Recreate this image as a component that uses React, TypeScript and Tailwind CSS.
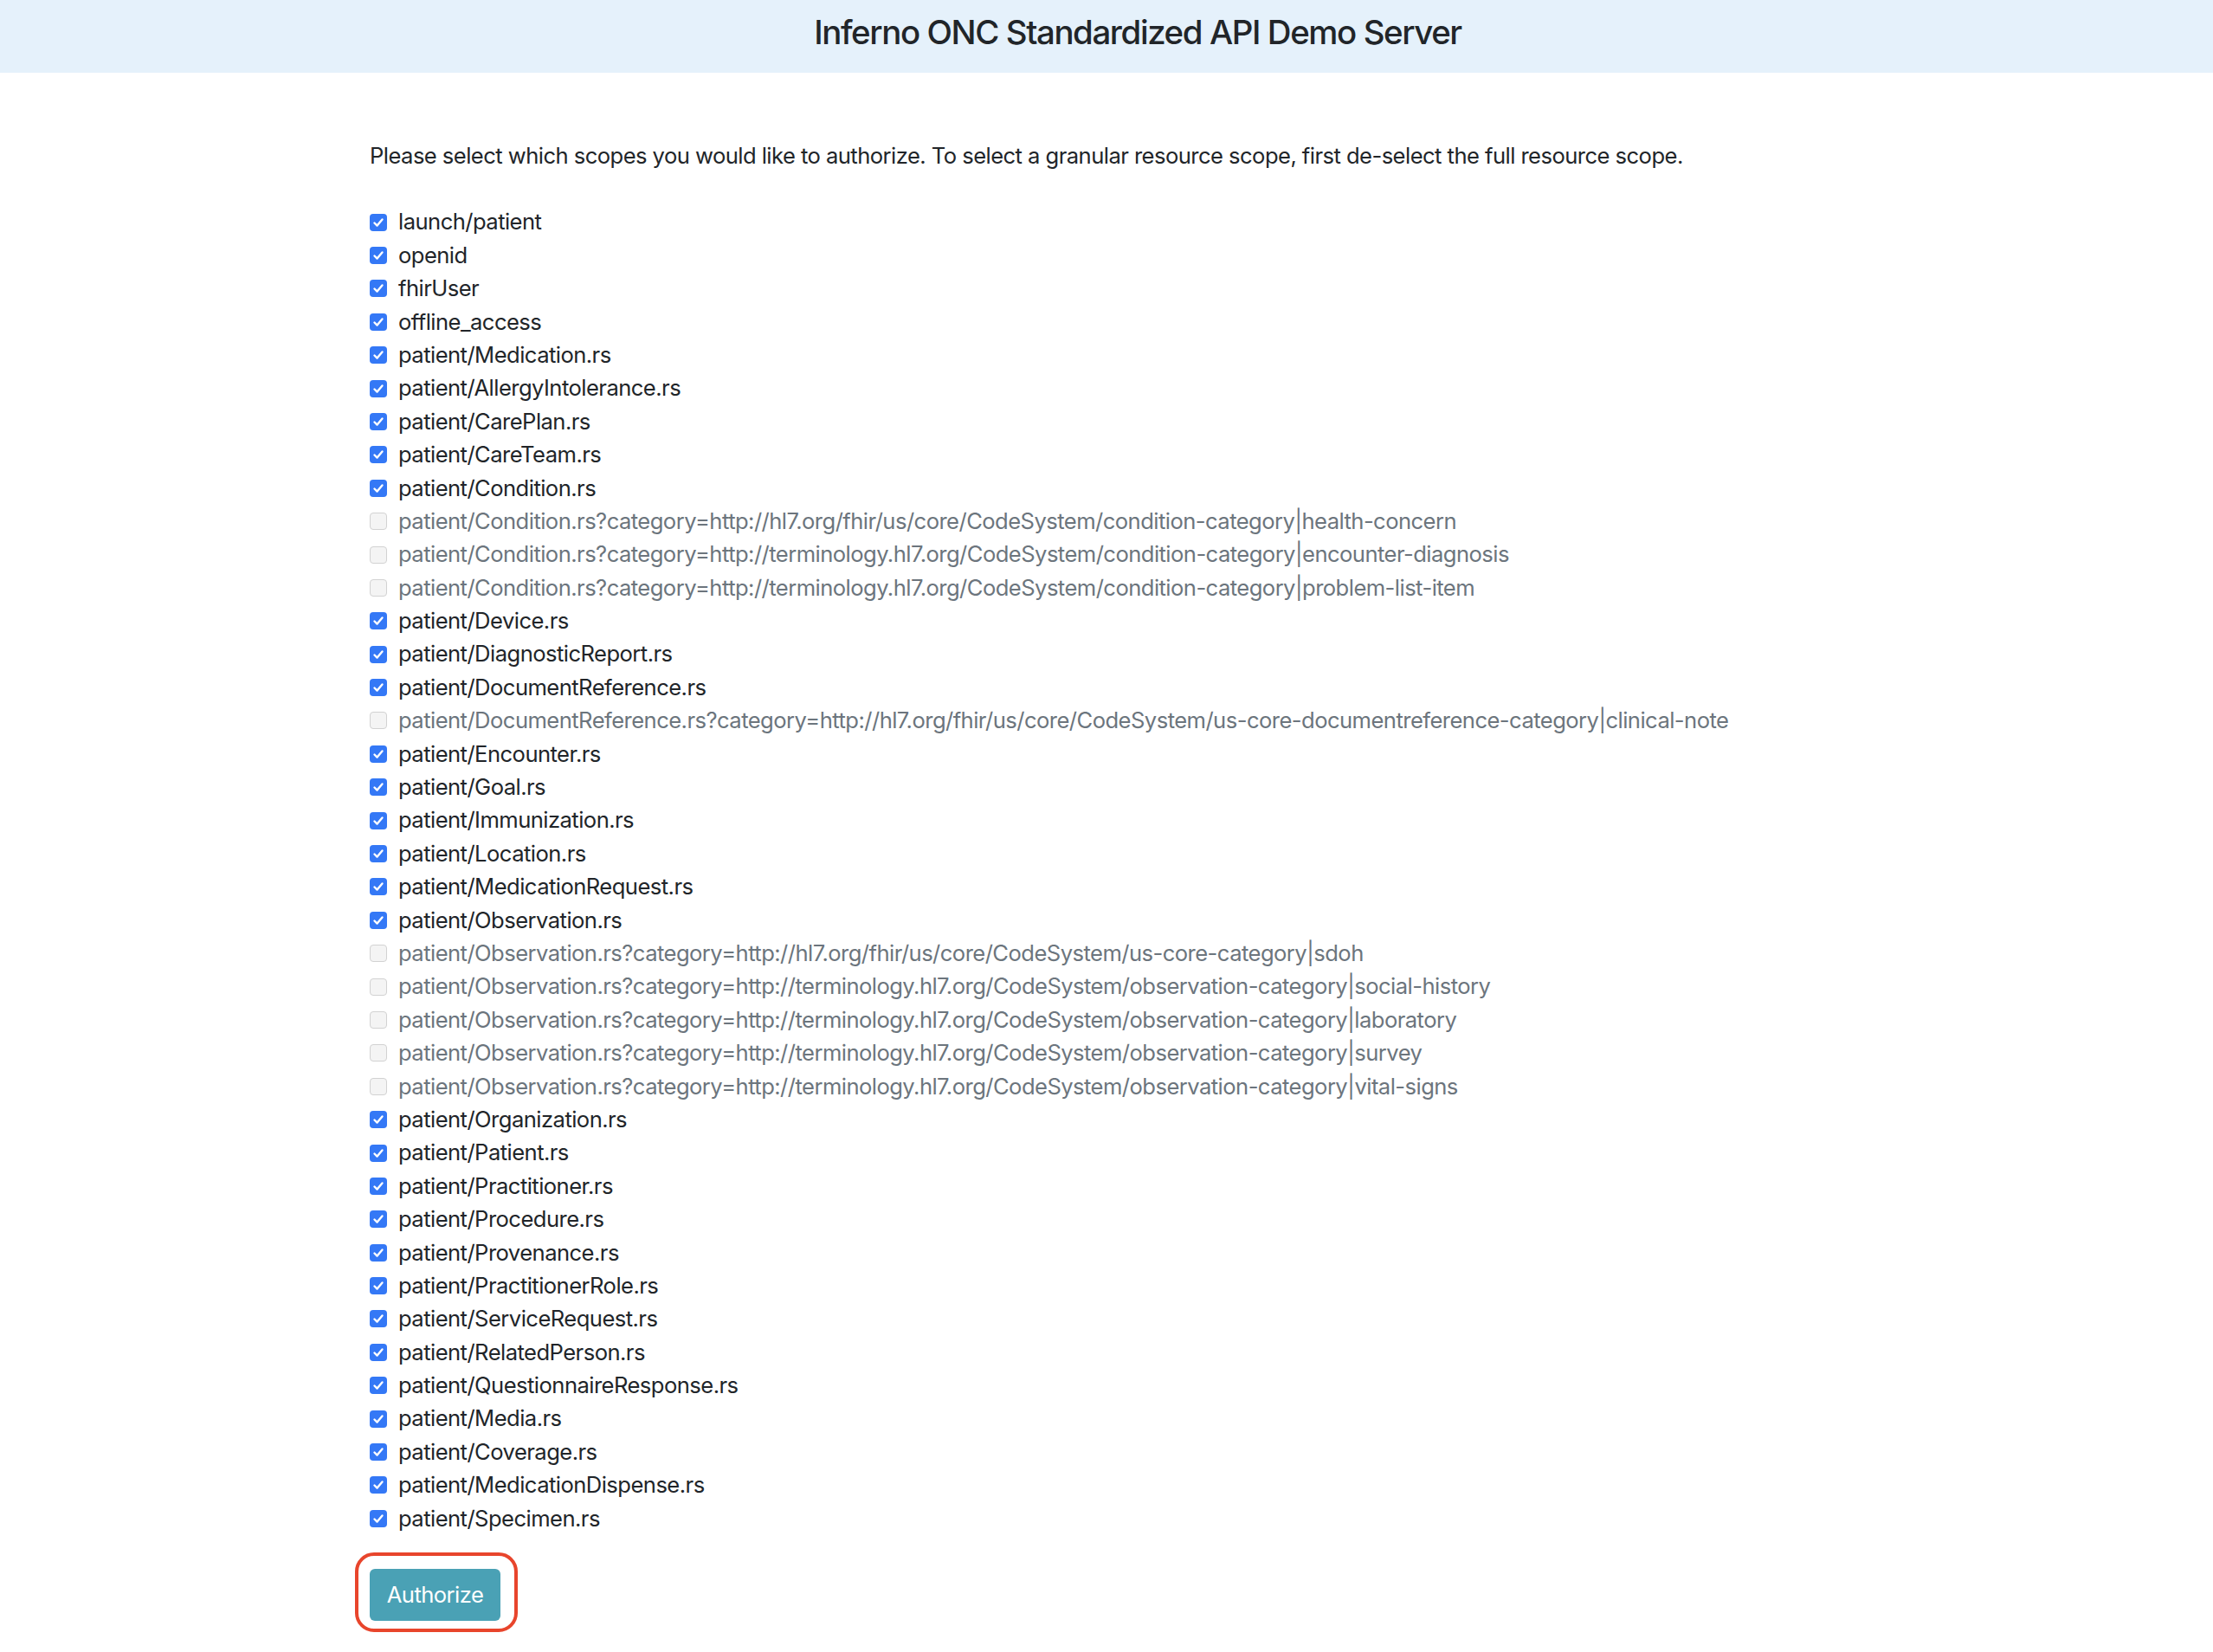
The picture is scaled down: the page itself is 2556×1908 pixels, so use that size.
const scopes: { name: string; enabled: boolean }[] = [
  { name: "launch/patient", enabled: true },
  { name: "openid", enabled: true },
  { name: "fhirUser", enabled: true },
  { name: "offline_access", enabled: true },
  { name: "patient/Medication.rs", enabled: true },
  { name: "patient/AllergyIntolerance.rs", enabled: true },
  { name: "patient/CarePlan.rs", enabled: true },
  { name: "patient/CareTeam.rs", enabled: true },
  { name: "patient/Condition.rs", enabled: true },
  { name: "patient/Condition.rs?category=http://hl7.org/fhir/us/core/CodeSystem/condition-category|health-concern", enabled: false },
  { name: "patient/Condition.rs?category=http://terminology.hl7.org/CodeSystem/condition-category|encounter-diagnosis", enabled: false },
  { name: "patient/Condition.rs?category=http://terminology.hl7.org/CodeSystem/condition-category|problem-list-item", enabled: false },
  { name: "patient/Device.rs", enabled: true },
  { name: "patient/DiagnosticReport.rs", enabled: true },
  { name: "patient/DocumentReference.rs", enabled: true },
  { name: "patient/DocumentReference.rs?category=http://hl7.org/fhir/us/core/CodeSystem/us-core-documentreference-category|clinical-note", enabled: false },
  { name: "patient/Encounter.rs", enabled: true },
  { name: "patient/Goal.rs", enabled: true },
  { name: "patient/Immunization.rs", enabled: true },
  { name: "patient/Location.rs", enabled: true },
  { name: "patient/MedicationRequest.rs", enabled: true },
  { name: "patient/Observation.rs", enabled: true },
  { name: "patient/Observation.rs?category=http://hl7.org/fhir/us/core/CodeSystem/us-core-category|sdoh", enabled: false },
  { name: "patient/Observation.rs?category=http://terminology.hl7.org/CodeSystem/observation-category|social-history", enabled: false },
  { name: "patient/Observation.rs?category=http://terminology.hl7.org/CodeSystem/observation-category|laboratory", enabled: false },
  { name: "patient/Observation.rs?category=http://terminology.hl7.org/CodeSystem/observation-category|survey", enabled: false },
  { name: "patient/Observation.rs?category=http://terminology.hl7.org/CodeSystem/observation-category|vital-signs", enabled: false },
  { name: "patient/Organization.rs", enabled: true },
  { name: "patient/Patient.rs", enabled: true },
  { name: "patient/Practitioner.rs", enabled: true },
  { name: "patient/Procedure.rs", enabled: true },
  { name: "patient/Provenance.rs", enabled: true },
  { name: "patient/PractitionerRole.rs", enabled: true },
  { name: "patient/ServiceRequest.rs", enabled: true },
  { name: "patient/RelatedPerson.rs", enabled: true },
  { name: "patient/QuestionnaireResponse.rs", enabled: true },
  { name: "patient/Media.rs", enabled: true },
  { name: "patient/Coverage.rs", enabled: true },
  { name: "patient/MedicationDispense.rs", enabled: true },
  { name: "patient/Specimen.rs", enabled: true },
];

const CheckBox = ({ checked }: { checked: boolean }) =>
  checked ? (
    <span className="flex h-[20px] w-[20px] shrink-0 items-center justify-center rounded-[4px] bg-[#3478f6]">
      <svg width="14" height="14" viewBox="0 0 14 14" fill="none">
        <path d="M2.5 7.5 L5.6 10.6 L11.5 3.4" stroke="white" strokeWidth="2.4" strokeLinecap="round" strokeLinejoin="round" />
      </svg>
    </span>
  ) : (
    <span className="h-[20px] w-[20px] shrink-0 rounded-[4px] border-[1.5px] border-[#d2d2d2] bg-[#f4f4f4]" />
  );

export default function App() {
  return (
    <main className="min-h-screen w-full bg-white text-[#212529]" style={{ fontFamily: "Inter, 'Noto Sans', sans-serif" }}>
      <header className="flex h-[84px] w-full items-center justify-center bg-[#e5f1fb] pb-[10px] pl-[72px]">
        <h1 className="text-[38.4px] font-medium leading-[1.2] tracking-[-1.4px]">Inferno ONC Standardized API Demo Server</h1>
      </header>

      <div className="pl-[427px] pt-[77px] text-[25.6px] leading-[38.4px] tracking-[-0.55px]">
        <p className="mb-[38px]">
          Please select which scopes you would like to authorize. To select a granular resource scope, first de-select the full resource scope.
        </p>

        <div className="flex flex-col">
          {scopes.map(({ name, enabled }) => (
            <label key={name} className="flex h-[38.4px] items-center gap-[13px]">
              <CheckBox checked={enabled} />
              <span className={enabled ? "text-[#212529]" : "text-[#6c757d]"}>{name}</span>
            </label>
          ))}
        </div>

        <div className="relative mt-[39px] inline-block">
          <span className="pointer-events-none absolute -bottom-[13px] -left-[17px] -right-[20px] -top-[19px] rounded-[22px] border-[4px] border-[#e8452c]" />
          <button className="h-[60px] w-[151px] rounded-[6px] bg-[#4aa1b5] text-[25.6px] text-white">Authorize</button>
        </div>
      </div>
    </main>
  );
}
